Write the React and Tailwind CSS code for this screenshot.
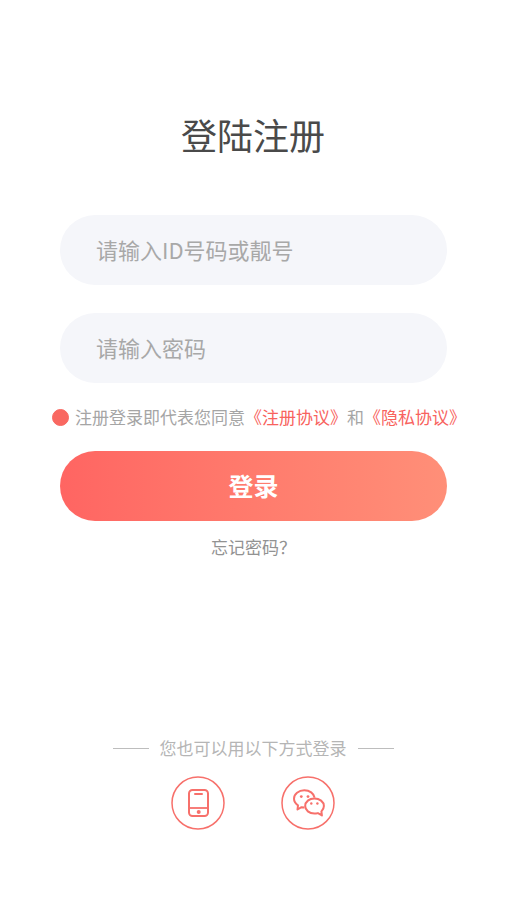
import { useState } from "react";

const PhoneIcon = () => (
  <svg viewBox="0 0 54 54" className="h-[54px] w-[54px]" fill="none" stroke="#f7706b" aria-hidden="true">
    <circle cx="27" cy="27" r="26" strokeWidth="1.5" />
    <rect x="18" y="14" width="19" height="26" rx="3.5" strokeWidth="2" />
    <path d="M18 32h19" strokeWidth="1.8" />
    <path d="M24 18h7" strokeWidth="2" strokeLinecap="round" />
    <circle cx="27.7" cy="36" r="2" fill="#f7706b" stroke="none" />
  </svg>
);

const WechatIcon = () => (
  <svg viewBox="0 0 54 54" className="h-[54px] w-[54px]" fill="none" stroke="#f7706b" aria-hidden="true">
    <circle cx="27" cy="27" r="26" strokeWidth="1.5" />
    <g strokeWidth="2" strokeLinejoin="round">
      <path d="M23.5 31.5 20.5 31.2 16.5 33.5 17 29.3C14.5 27.6 13 25.2 13 22.7 13 18 17.6 14.2 23.3 14.2c5.3 0 9.6 3.2 10.3 7.5" />
      <path d="M33.4 22.4c-5.2 0-9.2 3.4-9.2 7.6s4 7.6 9.2 7.6c1.2 0 2.4-.2 3.5-.5l4 2.3-.5-4c1.5-1.4 2.5-3.3 2.5-5.4 0-4.2-4.3-7.6-9.5-7.6z" />
    </g>
    <g fill="#f7706b" stroke="none">
      <circle cx="20.3" cy="20.6" r="1.4" />
      <circle cx="27" cy="20.6" r="1.4" />
      <circle cx="30.3" cy="27.5" r="1.2" />
      <circle cx="36.4" cy="27.5" r="1.2" />
    </g>
  </svg>
);

const Field = ({ label, type, value, onChange }) => (
  <input
    type={type}
    aria-label={label}
    placeholder={label}
    value={value}
    onChange={(e) => onChange(e.target.value)}
    className="h-[70px] w-full rounded-full bg-[#f5f6fa] px-9 pb-0.5 text-[22px] text-[#4a4a4a] outline-none placeholder:text-[#a8a8a8]"
  />
);

export default function App() {
  const [account, setAccount] = useState("");
  const [password, setPassword] = useState("");
  const [agreed, setAgreed] = useState(true);

  return (
    <main className="flex min-h-screen flex-col bg-white pt-[107px] pb-[70px] font-['Noto_Sans_CJK_SC',sans-serif]">
      <h1 className="text-center text-[36px] leading-[54px] text-[#4a4a4a]">登陆注册</h1>

      <form className="mt-[54px] flex flex-col pr-[59px] pl-[60px]" onSubmit={(e) => e.preventDefault()}>
        <div className="flex flex-col gap-7">
          <Field label="请输入ID号码或靓号" type="text" value={account} onChange={setAccount} />
          <Field label="请输入密码" type="password" value={password} onChange={setPassword} />
        </div>

        {/* Agreement */}
        <div className="-mx-2 flex h-[68px] items-center gap-1.5 text-[17px] whitespace-nowrap text-[#a5a5a5]">
          <input
            id="agree"
            type="checkbox"
            checked={agreed}
            onChange={(e) => setAgreed(e.target.checked)}
            className="h-[17px] w-[17px] shrink-0 appearance-none rounded-full border border-[#f96861] checked:bg-[#f96861]"
          />
          <p>
            <label htmlFor="agree">注册登录即代表您同意</label>
            <a href="#register" className="text-[#f8625d]">《注册协议》</a>
            和
            <a href="#privacy" className="text-[#f8625d]">《隐私协议》</a>
          </p>
        </div>

        <button
          type="submit"
          className="h-[70px] rounded-full bg-linear-to-r from-[#ff6562] to-[#ff8f78] text-[25px] font-bold text-white"
        >
          登录
        </button>
        <a href="#forgot" className="mt-3.5 self-center text-[17px] leading-6 text-[#929292]">
          忘记密码？
        </a>
      </form>

      {/* Other ways to sign in */}
      <section className="mt-auto">
        <div className="flex items-center justify-center gap-[11px]">
          <span className="h-px w-9 bg-[#bdbdbd]" />
          <h2 className="text-[17px] leading-6 text-[#b5b5b5]">您也可以用以下方式登录</h2>
          <span className="h-px w-9 bg-[#bdbdbd]" />
        </div>
        <div className="mt-4 flex justify-center gap-14">
          <button type="button" aria-label="手机登录">
            <PhoneIcon />
          </button>
          <button type="button" aria-label="微信登录">
            <WechatIcon />
          </button>
        </div>
      </section>
    </main>
  );
}
